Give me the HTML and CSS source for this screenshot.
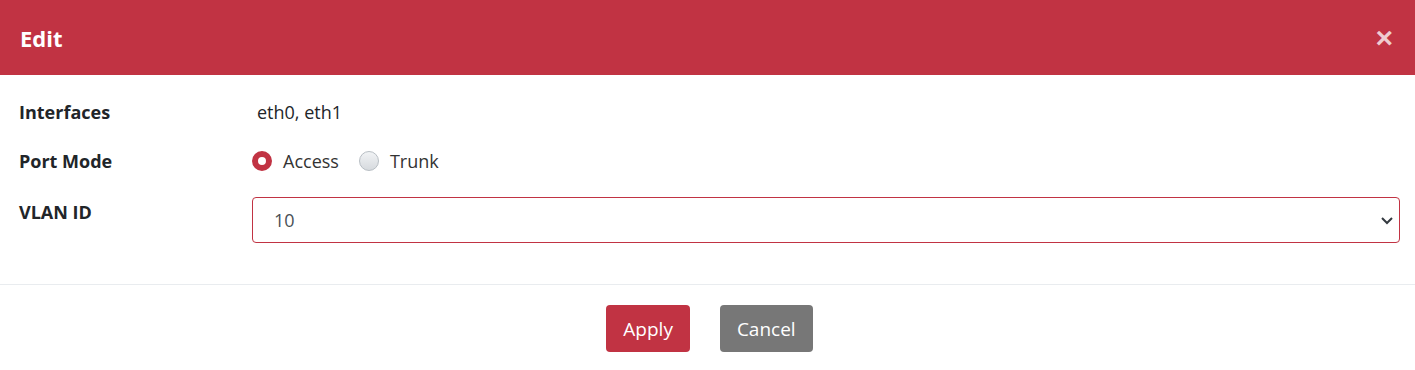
FILE: index.html
```html
<!DOCTYPE html>
<html lang="en">
<head>
<meta charset="UTF-8">
<meta name="viewport" content="width=device-width, initial-scale=1.0">
<title>Edit</title>
<link rel="stylesheet" href="styles.css">
</head>
<body>
<div class="modal">
  <div class="modal-header">
    <h1>Edit</h1>
    <button class="close">&times;</button>
  </div>
  <div class="modal-body">
    <div class="row">
      <label>Interfaces</label>
      <div class="value text">eth0, eth1</div>
    </div>
    <div class="row">
      <label>Port Mode</label>
      <div class="value radios">
        <span class="radio checked"></span><span class="radio-label">Access</span>
        <span class="radio"></span><span class="radio-label">Trunk</span>
      </div>
    </div>
    <div class="row row-select">
      <label>VLAN ID</label>
      <div class="value">
        <div class="select">
          <span>10</span>
          <svg width="14" height="10" viewBox="0 0 14 10"><path d="M2 3 L7 8 L12 3" fill="none" stroke="#343a40" stroke-width="2"/></svg>
        </div>
      </div>
    </div>
  </div>
  <div class="modal-footer">
    <button class="btn btn-apply">Apply</button>
    <button class="btn btn-cancel">Cancel</button>
  </div>
</div>
</body>
</html>
```

FILE: styles.css
```css
body {
  margin: 0;
  font-family: "Open Sans", sans-serif;
  color: #212529;
  background: #fff;
}

.modal {
  width: 1415px;
}

.modal-header {
  height: 75px;
  background-color: #c13343;
  display: flex;
  align-items: center;
  justify-content: space-between;
  padding: 0 22px 0 20px;
  box-sizing: border-box;
}

.modal-header h1 {
  margin: 0;
  color: #fff;
  font-size: 22px;
  font-weight: 700;
}

.close {
  background: none;
  border: none;
  padding: 0;
  color: rgba(255, 255, 255, 0.75);
  font-size: 30px;
  font-weight: 700;
  line-height: 1;
  cursor: pointer;
}

.modal-body {
  padding: 24px 15px 41px 19px;
  border-bottom: 1px solid #e9ecef;
}

.row {
  display: grid;
  grid-template-columns: 233px 1fr;
  line-height: 26px;
  margin-bottom: 23px;
  font-size: 18px;
}

.row label {
  font-weight: 700;
}

.row-select {
  margin-bottom: 0;
}

.row-select label {
  padding-top: 2px;
}

.text {
  padding-left: 5px;
}

.radios {
  display: flex;
  align-items: center;
  color: #333;
}

.radio {
  width: 20px;
  height: 20px;
  border-radius: 50%;
  box-sizing: border-box;
  border: 1px solid #b8bec4;
  background: linear-gradient(#f1f3f5, #d6dade);
  margin-right: 11px;
}

.radio.checked {
  border: 6px solid #c13343;
  background: #fff;
}

.radio-label {
  margin-right: 20px;
}

.select {
  height: 46px;
  border: 1px solid #c13343;
  border-radius: 4px;
  box-sizing: border-box;
  display: flex;
  align-items: center;
  justify-content: space-between;
  padding: 0 5px 0 21px;
  color: #495057;
}

.modal-footer {
  display: flex;
  justify-content: center;
  gap: 30px;
  padding: 20px 0 18px 4px;
}

.btn {
  height: 47px;
  border: none;
  border-radius: 4px;
  color: #fff;
  font-family: "Open Sans", sans-serif;
  font-size: 19px;
  padding: 0 17px;
  cursor: pointer;
}

.btn-apply {
  background-color: #c13343;
}

.btn-cancel {
  background-color: #777;
}
```
